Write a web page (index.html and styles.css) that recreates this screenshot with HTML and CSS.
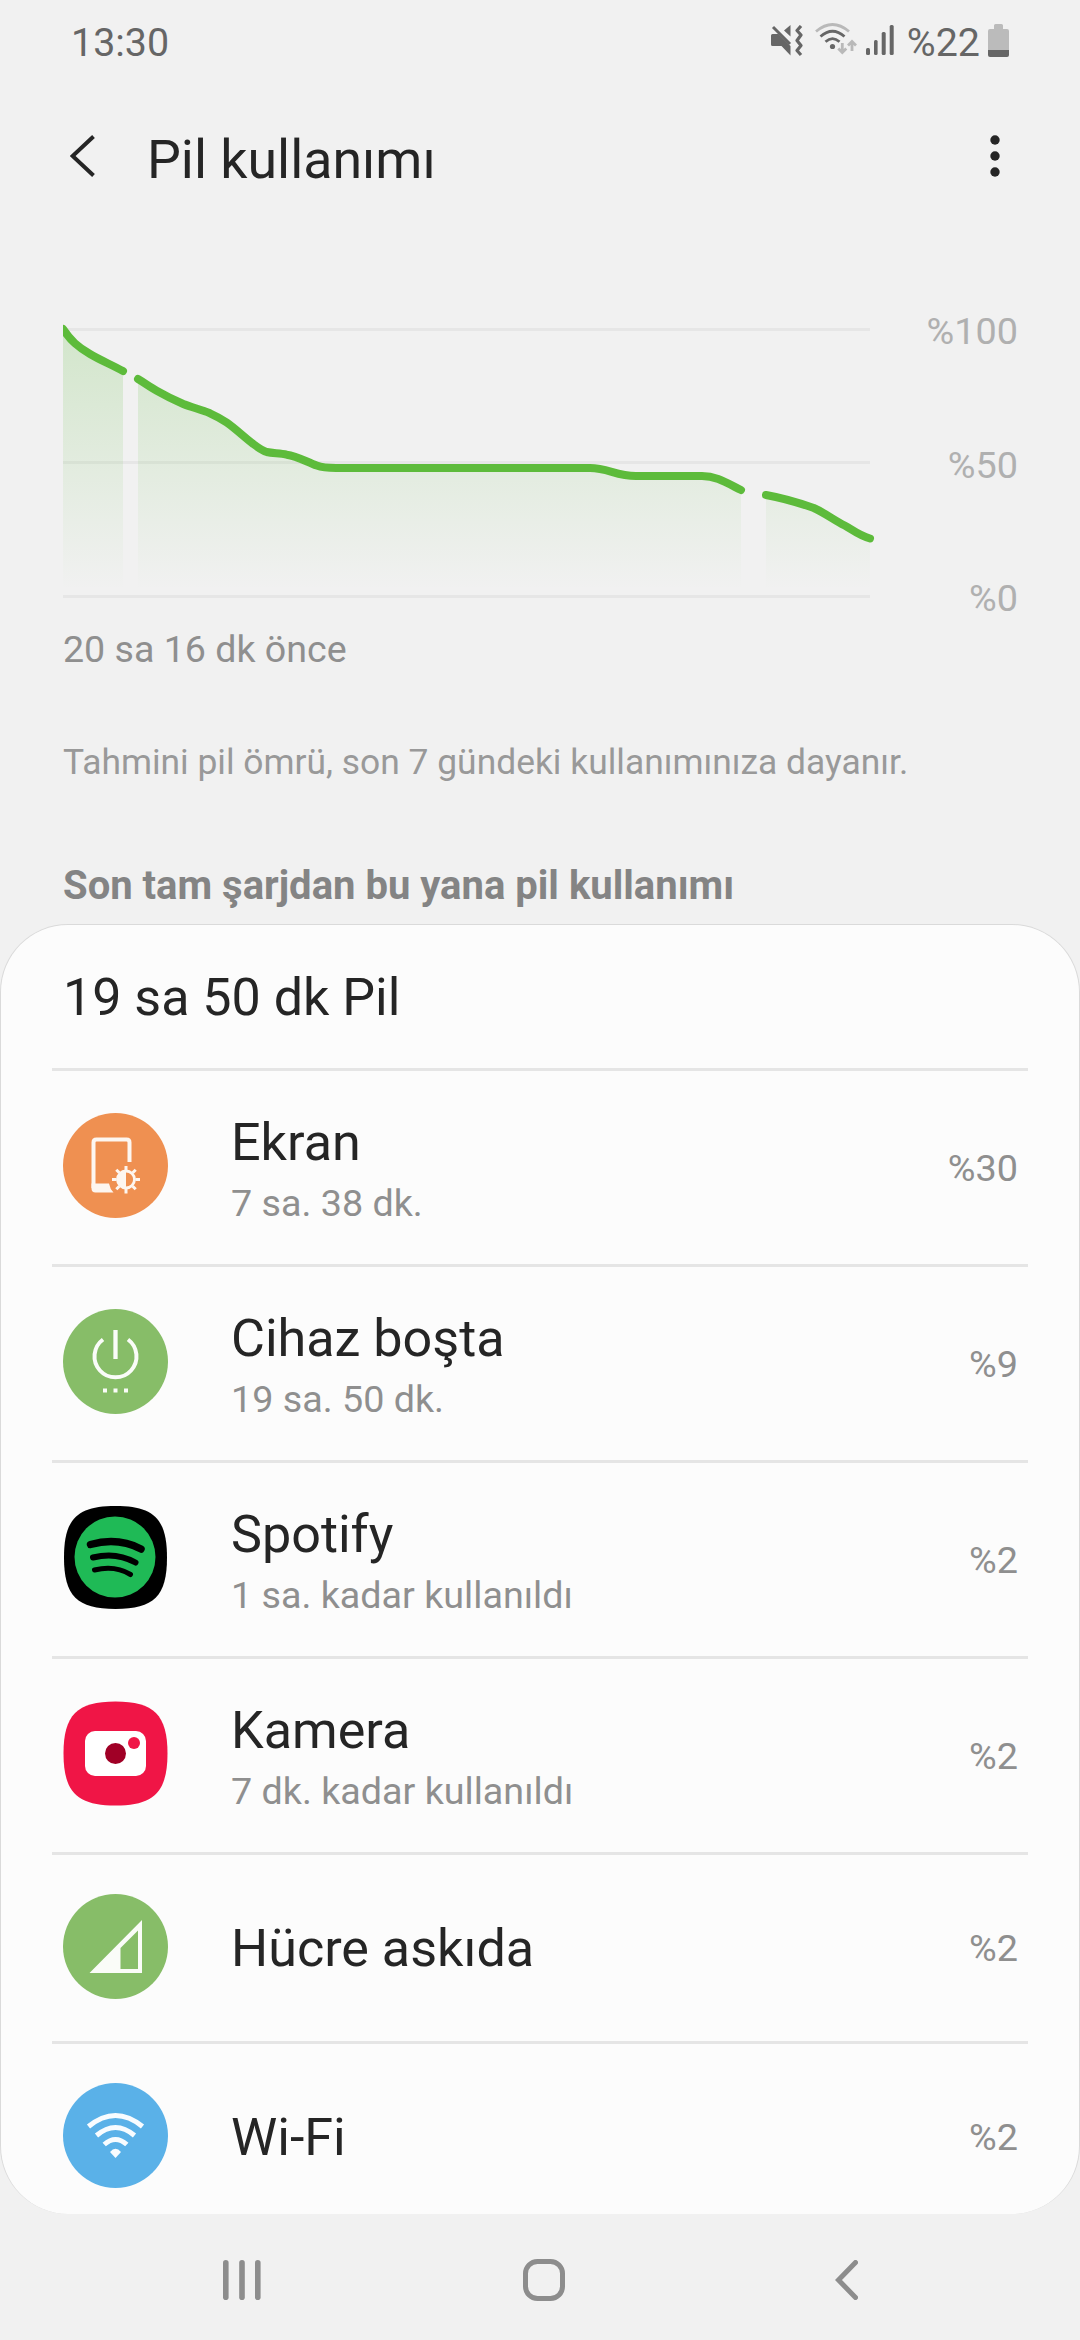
FILE: index.html
```html
<!DOCTYPE html>
<html lang="tr">
<head>
<meta charset="utf-8">
<title>Pil kullanımı</title>
<link rel="stylesheet" href="styles.css">
</head>
<body>
<div class="screen">
  <header class="status">
    <span class="time">13:30</span>
    <div class="indicators">
      <svg class="ind-mute" width="32" height="32" viewBox="0 0 32 32">
        <path d="M0 10.500q0-1.500 1.500-1.500h6l12 12v9.500l-9-9.500h-9q-1.500 0-1.500-1.500zM13 5.500L19.500 0v11.500z" fill="#666"/>
        <path d="M2 2L19 19" stroke="#666" stroke-width="3" fill="none"/>
        <path d="M30 1L26 5.500L30 10L26 15.500L30 20.500L26 25.500L30 30" stroke="#666" stroke-width="3.200" fill="none" stroke-linejoin="round"/>
      </svg>
      <svg class="ind-wifi" width="42" height="33" viewBox="0 0 42 33" fill="none" stroke-width="2.800">
        <path d="M1 8.500Q17.500 -5.500 34 8.500" stroke="#b9b9b9"/>
        <path d="M5.500 13.500Q17.500 3 29.500 13.500M10.500 18.800Q17.500 12.500 24.500 18.800" stroke="#666"/>
        <circle cx="17.500" cy="23.500" r="2.600" fill="#666"/>
        <path d="M27.300 20v9.500M23.300 25.500l4 4 4-4M37 28V19M33 22.500l4-4 4 4" stroke="#b9b9b9" stroke-width="2.800"/>
      </svg>
      <svg class="ind-signal" width="28" height="30" viewBox="0 0 28 30" fill="#666">
        <rect x="0" y="23" width="4" height="7" rx="1.500"/><rect x="8" y="15" width="3.600" height="15" rx="1.500"/><rect x="15.700" y="7" width="4" height="23" rx="1.500"/><rect x="23.700" y="0" width="4" height="30" rx="1.500"/>
      </svg>
      <span class="battery-text">%22</span>
      <svg class="ind-battery" width="21" height="33" viewBox="0 0 21 33">
        <path d="M6 1.500Q6 0 7.500 0h6Q15 0 15 1.500V5h4q2 0 2 2v19H0V7q0-2 2-2h4z" fill="#bbb"/>
        <path d="M0 26h21v5q0 2-2 2H2q-2 0-2-2z" fill="#666"/>
      </svg>
    </div>
  </header>

  <div class="appbar">
    <svg class="back" width="25" height="42" viewBox="0 0 25 42"><path d="M23.500 1.500L2.600 21L23.500 40.500" fill="none" stroke="#252525" stroke-width="4"/></svg>
    <h1 class="title">Pil kullanımı</h1>
    <svg class="more" width="10" height="42" viewBox="0 0 10 42" fill="#252525"><circle cx="5" cy="5" r="4.700"/><circle cx="5" cy="21" r="4.700"/><circle cx="5" cy="37" r="4.700"/></svg>
  </div>

  <section class="chart">
    <svg class="plot" width="812" height="280" viewBox="63 320 812 280">
      <defs>
        <linearGradient id="fade" gradientUnits="userSpaceOnUse" x1="0" y1="328" x2="0" y2="590">
          <stop offset="0" stop-color="#5dbb3b" stop-opacity=".21"/><stop offset="1" stop-color="#5dbb3b" stop-opacity="0"/>
        </linearGradient>
      </defs>
      <path d="M63 328h807v3H63zM63 461h807v3H63zM63 595h807v3H63z" fill="#e6e6e6"/>
      <g fill="url(#fade)">
        <path d="M63 329C71 341 78 347 90 354C99 359.500 112 365 123 371V590H63z"/>
        <path d="M138 379C144 382.500 150 387 156.700 390.700C166 396 174 400 183.300 404C192 407.500 201 409.500 210 413.300C216 416 221 418.500 226.700 422.500C236 429 244 437 253.300 444C258 447.500 262 450.500 266.700 452C273 453.500 280 453 286.700 454.700C297 456 307 462 316.700 465.500C322 467.500 327 468 336 468H590C608 468 616 476 636 476H702C716 476 726 482.500 741 490V590H138z"/>
        <path d="M766 495C783 498 798 502.500 813.800 508C824 512.500 834 520 844.700 525.500C853 530 858 535 870 538.500V590H766z"/>
      </g>
      <g fill="none" stroke="#5dbb3b" stroke-width="8" stroke-linecap="round">
        <path d="M63 329C71 341 78 347 90 354C99 359.500 112 365 123 371"/>
        <path d="M138 379C144 382.500 150 387 156.700 390.700C166 396 174 400 183.300 404C192 407.500 201 409.500 210 413.300C216 416 221 418.500 226.700 422.500C236 429 244 437 253.300 444C258 447.500 262 450.500 266.700 452C273 453.500 280 453 286.700 454.700C297 456 307 462 316.700 465.500C322 467.500 327 468 336 468H590C608 468 616 476 636 476H702C716 476 726 482.500 741 490"/>
        <path d="M766 495C783 498 798 502.500 813.800 508C824 512.500 834 520 844.700 525.500C853 530 858 535 870 538.500"/>
      </g>
    </svg>
    <div class="axis"><span>%100</span><span>%50</span><span>%0</span></div>
  </section>
  <p class="ago">20 sa 16 dk önce</p>
  <p class="note">Tahmini pil ömrü, son 7 gündeki kullanımınıza dayanır.</p>
  <h2 class="heading">Son tam şarjdan bu yana pil kullanımı</h2>

  <main class="card">
    <div class="summary">19 sa 50 dk Pil</div>
    <ul class="list">
      <li class="row">
        <svg class="icon" viewBox="0 0 105 105">
          <circle cx="52.500" cy="52.500" r="52.500" fill="#ef9051"/>
          <path d="M66.500 49V29.500q0-3-3-3H33.500q-3 0-3 3v45.500" fill="none" stroke="#fdf6f0" stroke-width="4"/>
          <path d="M28.500 70.500H46q1 5.500 4.500 9H32.500q-4 0-4-4z" fill="#fdf6f0"/>
          <circle cx="63" cy="66.500" r="8.500" fill="none" stroke="#fdf6f0" stroke-width="2.800"/>
          <path d="M63 58a8.500 8.500 0 0 0 0 17z" fill="#fdf6f0"/>
          <path d="M63 57v-4M63 76v4.500M53.500 66.500H49M72.500 66.500H77M56.300 59.800l-3-3M69.700 73.200l3 3M56.300 73.200l-3 3M69.700 59.800l3-3" stroke="#fdf6f0" stroke-width="3"/>
        </svg>
        <div class="text"><div class="name">Ekran</div><div class="sub">7 sa. 38 dk.</div></div>
        <span class="pct">%30</span>
      </li>
      <li class="row">
        <svg class="icon" viewBox="0 0 105 105">
          <circle cx="52.500" cy="52.500" r="52.500" fill="#87bd68"/>
          <path d="M40 30.500a21 21 0 1 0 25 0" fill="none" stroke="#fafcf8" stroke-width="4"/>
          <path d="M52.500 21v29" stroke="#fafcf8" stroke-width="4.300"/>
          <path d="M40 79.500h4v4h-4zM50.500 79.500h4v4h-4zM61 79.500h4v4h-4z" fill="#fafcf8"/>
        </svg>
        <div class="text"><div class="name">Cihaz boşta</div><div class="sub">19 sa. 50 dk.</div></div>
        <span class="pct">%9</span>
      </li>
      <li class="row">
        <svg class="icon" viewBox="0 0 105 105">
          <path d="M52.500 1C91 1 104 14 104 52.500S91 104 52.500 104S1 91 1 52.500S14 1 52.500 1z" fill="#000"/>
          <circle cx="52" cy="52" r="40.500" fill="#1fba56"/>
          <g fill="none" stroke="#000" stroke-linecap="round"><path d="M27.500 39.500Q55 32 78 44" stroke-width="7.500"/><path d="M30 52.500Q53 46.500 72.500 57.500" stroke-width="6"/><path d="M31.500 65Q52 60 67.500 69.500" stroke-width="5"/></g>
        </svg>
        <div class="text"><div class="name">Spotify</div><div class="sub">1 sa. kadar kullanıldı</div></div>
        <span class="pct">%2</span>
      </li>
      <li class="row">
        <svg class="icon" viewBox="0 0 105 105">
          <path d="M52.500 .5C91 .5 104.500 14 104.500 52.500S91 104.500 52.500 104.500S.5 91 .5 52.500S14 .5 52.500 .5z" fill="#f01546"/>
          <rect x="22" y="30" width="61" height="45" rx="10" fill="#fff"/>
          <circle cx="52.500" cy="52.500" r="10.500" fill="#a00026"/><circle cx="71" cy="42" r="6" fill="#f01546"/>
        </svg>
        <div class="text"><div class="name">Kamera</div><div class="sub">7 dk. kadar kullanıldı</div></div>
        <span class="pct">%2</span>
      </li>
      <li class="row short">
        <svg class="icon" viewBox="0 0 105 105">
          <circle cx="52.500" cy="52.500" r="52.500" fill="#87bd68"/>
          <path d="M26.500 79L79 26V79zM57.500 54V75H75V36.500z" fill="#fafcf8" fill-rule="evenodd"/>
        </svg>
        <div class="name">Hücre askıda</div>
        <span class="pct">%2</span>
      </li>
      <li class="row short">
        <svg class="icon" viewBox="0 0 105 105">
          <circle cx="52.500" cy="52.500" r="52.500" fill="#5ab1e8"/>
          <g fill="none" stroke="#f8fcff" stroke-width="5"><path d="M25.500 43.500Q52.500 21.500 79.500 43.500"/><path d="M33.500 52.500Q52.500 36.500 71.500 52.500"/><path d="M41.200 61.500Q52.500 51.500 63.800 61.500"/></g>
          <path d="M47 69q5.500-6.500 11 0l-5.500 6z" fill="#f8fcff"/>
        </svg>
        <div class="name">Wi-Fi</div>
        <span class="pct">%2</span>
      </li>
    </ul>
  </main>

  <nav class="nav">
    <svg width="38" height="40" viewBox="0 0 38 40" fill="#8d8d8d"><rect width="5.600" height="40" rx="2.800"/><rect x="16.200" width="5.600" height="40" rx="2.800"/><rect x="32" width="5.600" height="40" rx="2.800"/></svg>
    <svg width="42" height="42" viewBox="0 0 42 42"><rect x="2.500" y="2.500" width="37" height="37" rx="12" fill="none" stroke="#8d8d8d" stroke-width="5"/></svg>
    <svg width="23" height="40" viewBox="0 0 23 40"><path d="M20.500 2.500L3.500 20L20.500 37.500" fill="none" stroke="#8d8d8d" stroke-width="5" stroke-linecap="round"/></svg>
  </nav>
</div>
</body>
</html>
```
FILE: styles.css
```css
* { box-sizing: border-box; }

body {
  margin: 0;
  background: #f1f1f1;
  font-family: Roboto, sans-serif;
  color: #252525;
}

svg { display: block; flex: none; }

.screen {
  display: flex;
  flex-direction: column;
  width: 1080px;
  height: 2340px;
  overflow: hidden;
}

.status {
  display: flex;
  justify-content: space-between;
  height: 84px;
  padding: 0 71px 0 71px;
  font-size: 39.4px;
  line-height: 85px;
  color: #666;
}

.indicators { display: flex; align-items: flex-start; }
.ind-mute { margin-top: 25px; }
.ind-wifi { margin: 23px 0 0 12px; }
.ind-signal { margin: 25px 0 0 9px; }
.battery-text { margin-left: 13px; }
.ind-battery { margin: 24px 0 0 8px; }

.appbar {
  display: flex;
  align-items: center;
  height: 144px;
  padding: 0 80px 0 70px;
}

.title {
  flex: 1;
  margin: 7px 0 0 52px;
  font-size: 53.7px;
  font-weight: 400;
  line-height: 72px;
}

.chart {
  display: flex;
  justify-content: space-between;
  height: 280px;
  margin-top: 92px;
  padding: 0 62px 0 63px;
}

.axis {
  display: flex;
  flex-direction: column;
  justify-content: space-between;
  height: 321px;
  margin-top: -16px;
  font-size: 37.8px;
  line-height: 54px;
  text-align: right;
  color: #b0b0b0;
}

.ago {
  margin: 22px 63px 0;
  font-size: 37.6px;
  line-height: 55px;
  color: #8f8f8f;
}

.note {
  margin: 60px 63px 0;
  font-size: 35.4px;
  line-height: 50px;
  color: #999;
}

.heading {
  margin: 72px 63px 0;
  font-size: 40px;
  font-weight: 700;
  line-height: 54px;
  color: #848484;
}

.card {
  flex: none;
  height: 1290px;
  margin-top: 11px;
  padding: 0 51px;
  border: 1px solid #dadada;
  border-bottom: 0;
  border-radius: 68px;
  background: #fcfcfc;
  overflow: hidden;
}

.summary {
  height: 143px;
  padding-left: 11px;
  font-size: 52px;
  line-height: 146px;
}

.list { margin: 0; padding: 0; list-style: none; }

.row {
  display: flex;
  align-items: center;
  height: 196px;
  padding: 0 10px 0 11px;
  border-top: 3px solid #e5e5e5;
}

.short { height: 189px; }

.icon { width: 105px; height: 105px; margin: 0 63px 4px 0; }

.text { padding-top: 6px; }
.name { font-size: 52.1px; line-height: 65px; }
.sub { font-size: 37.7px; line-height: 56px; color: #8f8f8f; }

.pct { margin-left: auto; font-size: 37.8px; line-height: 54px; color: #8f8f8f; }

.nav {
  display: grid;
  grid-template-columns: repeat(3, 1fr);
  place-items: center;
  height: 126px;
  padding: 6px 83px 0 91px;
}
```
